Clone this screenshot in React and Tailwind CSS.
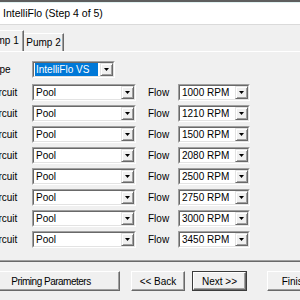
import React from "react";

const circuits = [
  { circuit: "Pool", flow: "1000 RPM" },
  { circuit: "Pool", flow: "1210 RPM" },
  { circuit: "Pool", flow: "1500 RPM" },
  { circuit: "Pool", flow: "2080 RPM" },
  { circuit: "Pool", flow: "2500 RPM" },
  { circuit: "Pool", flow: "2750 RPM" },
  { circuit: "Pool", flow: "3000 RPM" },
  { circuit: "Pool", flow: "3450 RPM" },
];

const DropButton = () => (
  <div className="flex w-[13px] items-center justify-center border border-t-[#e3e3e3] border-l-[#e3e3e3] border-r-[#696969] border-b-[#696969] bg-[#f0f0f0] shadow-[inset_1px_1px_0_#ffffff,inset_-1px_-1px_0_#a0a0a0]">
    <svg width="5" height="3" viewBox="0 0 5 3">
      <polygon points="0,0 5,0 2.5,3" fill="#000" />
    </svg>
  </div>
);

const Combo = ({ value, width, selected }) => (
  <div className={`flex h-[17px] shrink-0 ${width} border border-t-[#a0a0a0] border-l-[#a0a0a0] border-r-white border-b-white bg-white`}>
    <div className="flex flex-1 border border-t-[#696969] border-l-[#696969] border-r-[#e3e3e3] border-b-[#e3e3e3]">
      <div className="flex flex-1 items-center pl-px pr-[2px]">
        <span
          className={
            selected
              ? "flex h-full flex-1 items-center bg-[#0078d7] pl-px text-white"
              : "pl-px text-black"
          }
        >
          {value}
        </span>
      </div>
      <DropButton />
    </div>
  </div>
);

const Button = ({ children, width, isDefault }) => (
  <div
    className={`flex h-[20px] ${width} shrink-0 items-center justify-center ${
      isDefault ? "border border-[#3c3c3c]" : ""
    }`}
  >
    <div className="flex h-full w-full items-center justify-center border border-t-white border-l-white border-r-[#696969] border-b-[#696969] bg-[#f0f0f0] shadow-[inset_-1px_-1px_0_#a0a0a0]">
      {children}
    </div>
  </div>
);

export default function App() {
  return (
    <div className="flex h-[300px] w-[300px] flex-col overflow-hidden bg-[#f0f0f0] font-['Liberation_Sans',Arial,sans-serif] text-[10px] text-black">
      <div className="h-[2px] shrink-0 bg-[#5e5e5e]" />
      <div className="h-px shrink-0 bg-[#e0f2f2]" />
      <div className="flex h-[22px] shrink-0 items-center border-b border-[#dadada] bg-white pl-[3px] text-[10.5px]">
        IntelliFlo (Step 4 of 5)
      </div>

      {/* tabs */}
      <div className="mt-[6px] flex h-[20px] shrink-0 items-end">
        <div className="relative z-10 -ml-[21px] flex h-[21px] w-[45px] shrink-0 items-center justify-center border-t border-l border-t-white border-l-white border-r border-r-[#696969] bg-[#f0f0f0] pb-[2px] shadow-[inset_-1px_0_0_#a0a0a0]">
          Pump 1
        </div>
        <div className="flex h-[18px] w-[40px] shrink-0 items-center justify-center border-t border-t-white border-r border-r-[#696969] bg-[#f0f0f0] shadow-[inset_-1px_0_0_#a0a0a0]">
          Pump 2
        </div>
      </div>

      {/* panel */}
      <div className="flex h-[210px] shrink-0 flex-col border-t border-t-white border-b border-b-[#a0a0a0] shadow-[0_1px_0_#696969]">
        <div className="mt-[9px] flex items-center">
          <div className="-ml-[11px] w-[43px] shrink-0">Type</div>
          <Combo value="IntelliFlo VS" width="w-[83px]" selected />
        </div>
        <div className="mt-[6px] flex flex-col gap-[4px]">
          {circuits.map((row, i) => (
            <div key={i} className="flex items-center">
              <div className="-ml-[11px] w-[43px] shrink-0">Circuit</div>
              <Combo value={row.circuit} width="w-[104px]" />
              <div className="ml-[12px] w-[30px] shrink-0">Flow</div>
              <Combo value={row.flow} width="w-[72px]" />
            </div>
          ))}
        </div>
      </div>

      {/* buttons */}
      <div className="mt-[10px] flex items-center">
        <div className="-ml-[18px] shrink-0">
          <Button width="w-[138px]">
            <span className="tracking-[-0.5px]">Priming Parameters</span>
          </Button>
        </div>
        <div className="ml-[11px] shrink-0">
          <Button width="w-[54px]">&lt;&lt; Back</Button>
        </div>
        <div className="ml-[7px] shrink-0">
          <Button width="w-[55px]" isDefault>
            Next &gt;&gt;
          </Button>
        </div>
        <div className="ml-[20px] shrink-0">
          <Button width="w-[56px]">Finish</Button>
        </div>
      </div>
    </div>
  );
}
